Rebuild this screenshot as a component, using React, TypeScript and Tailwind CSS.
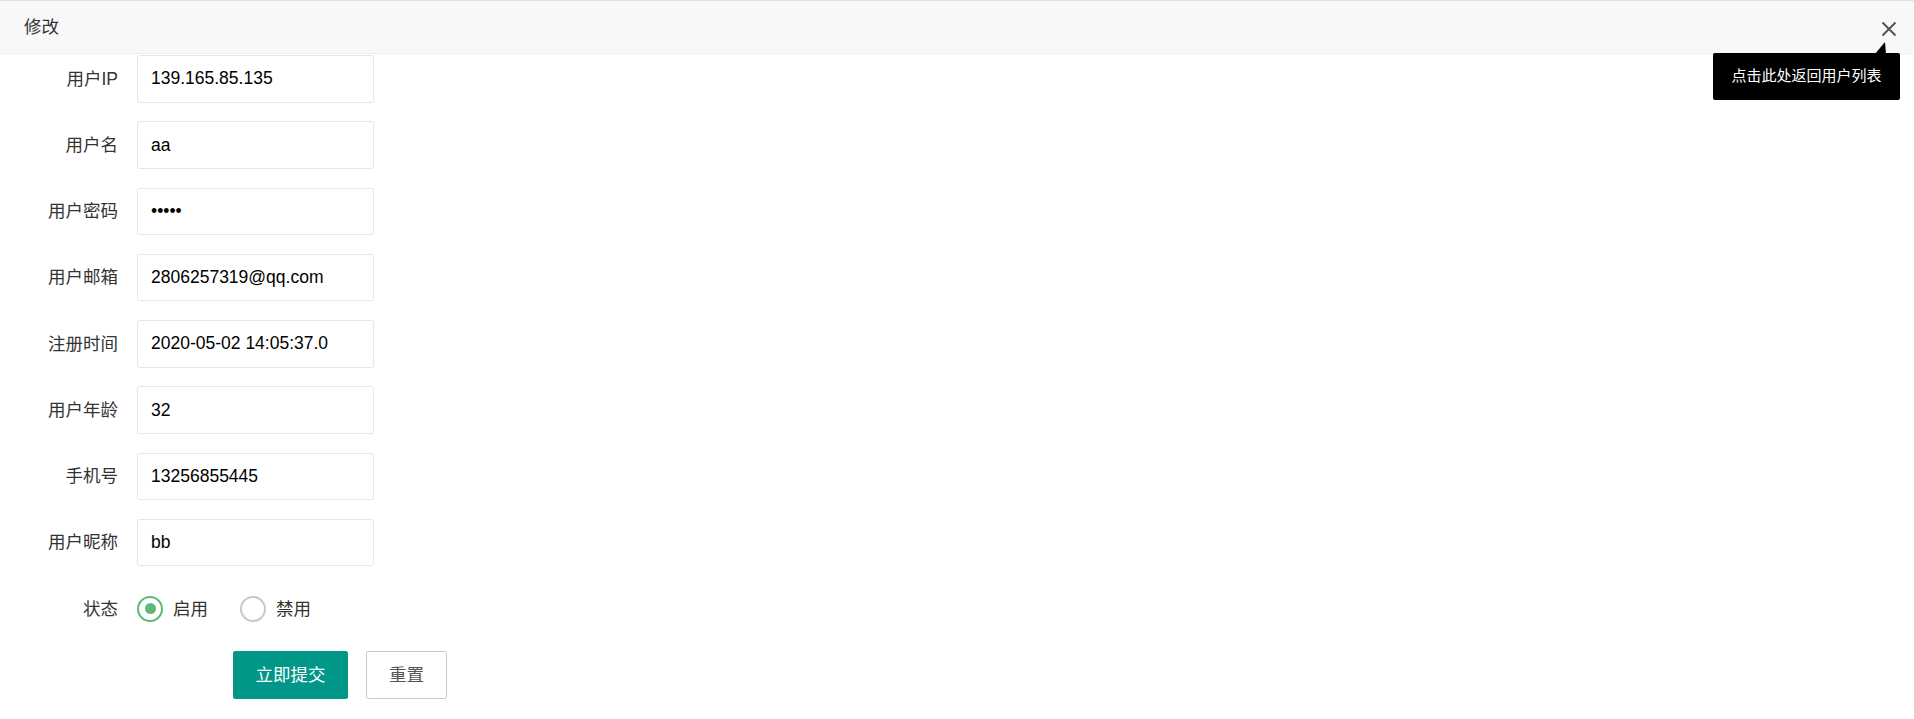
import { useState } from 'react';

const fields = [
  { label: '用户IP', value: '139.165.85.135' },
  { label: '用户名', value: 'aa' },
  { label: '用户密码', value: '12345', type: 'password' },
  { label: '用户邮箱', value: '2806257319@qq.com' },
  { label: '注册时间', value: '2020-05-02 14:05:37.0' },
  { label: '用户年龄', value: '32' },
  { label: '手机号', value: '13256855445' },
  { label: '用户昵称', value: 'bb' },
];

export default function App() {
  const [status, setStatus] = useState<'on' | 'off'>('on');

  return (
    <div
      className="relative min-h-[719px] w-full bg-white text-[#333] border-t border-[#e2e2e2]"
      style={{ fontFamily: '"Liberation Sans", Arial, "Noto Sans CJK SC", sans-serif' }}
    >
      {/* 标题栏 */}
      <div className="h-[53px] bg-[#f8f8f8] border-b border-[#eee] pl-[24px] leading-[52px] text-[17.5px]">
        修改
      </div>

      <button className="absolute left-[1880px] top-[19px] w-[18px] h-[18px] flex items-center justify-center">
        <svg width="16" height="16" viewBox="0 0 16 16">
          <path d="M1.5 1.5 L14.5 14.5 M14.5 1.5 L1.5 14.5" stroke="#555" strokeWidth="2" fill="none" />
        </svg>
      </button>

      {/* 提示 */}
      <div className="absolute right-[14px] top-[41px]">
        <svg className="absolute right-[14px] top-0" width="11" height="12" viewBox="0 0 11 12">
          <polygon points="10,0 11,12 0,12" fill="#000" />
        </svg>
        <div className="mt-[11px] w-[187px] h-[47px] bg-black rounded-[2px] flex items-center justify-center text-white text-[15px]">
          点击此处返回用户列表
        </div>
      </div>

      {/* 表单 */}
      <div className="flex flex-col gap-[18.75px] pt-[1px]">
        {fields.map((f) => (
          <div key={f.label} className="flex items-center h-[47.5px]">
            <label className="w-[137px] pr-[19px] text-right text-[17.5px] text-[#333]">{f.label}</label>
            <input
              type={f.type || 'text'}
              defaultValue={f.value}
              readOnly
              className="w-[237px] h-[47.5px] border border-[#e6e6e6] rounded-[2.5px] pl-[13px] text-[17.5px] text-[#000] bg-white outline-none"
            />
          </div>
        ))}

        <div className="flex items-center h-[47.5px]">
          <label className="w-[137px] pr-[19px] text-right text-[17.5px] text-[#333]">状态</label>
          <div className="flex items-center">
            <button className="flex items-center gap-[10px] mr-[32px]" onClick={() => setStatus('on')}>
              <span
                className={
                  status === 'on'
                    ? 'w-[26px] h-[26px] rounded-full border-[2.5px] border-[#5fb878] flex items-center justify-center'
                    : 'w-[26px] h-[26px] rounded-full border-[2.5px] border-[#c9c9c9] flex items-center justify-center'
                }
              >
                {status === 'on' && <span className="w-[11px] h-[11px] rounded-full bg-[#5fb878]" />}
              </span>
              <span className="text-[17.5px] text-[#333]">启用</span>
            </button>
            <button className="flex items-center gap-[10px]" onClick={() => setStatus('off')}>
              <span
                className={
                  status === 'off'
                    ? 'w-[26px] h-[26px] rounded-full border-[2.5px] border-[#5fb878] flex items-center justify-center'
                    : 'w-[26px] h-[26px] rounded-full border-[2.5px] border-[#c9c9c9] flex items-center justify-center'
                }
              >
                {status === 'off' && <span className="w-[11px] h-[11px] rounded-full bg-[#5fb878]" />}
              </span>
              <span className="text-[17.5px] text-[#333]">禁用</span>
            </button>
          </div>
        </div>

        {/* 按钮 */}
        <div className="flex items-center pl-[233px]">
          <button className="w-[115px] h-[48px] bg-[#009688] text-white text-[17.5px] rounded-[2.5px]">
            立即提交
          </button>
          <button className="ml-[18px] w-[81px] h-[48px] bg-white border border-[#c9c9c9] text-[#555] text-[17.5px] rounded-[2.5px]">
            重置
          </button>
        </div>
      </div>
    </div>
  );
}
